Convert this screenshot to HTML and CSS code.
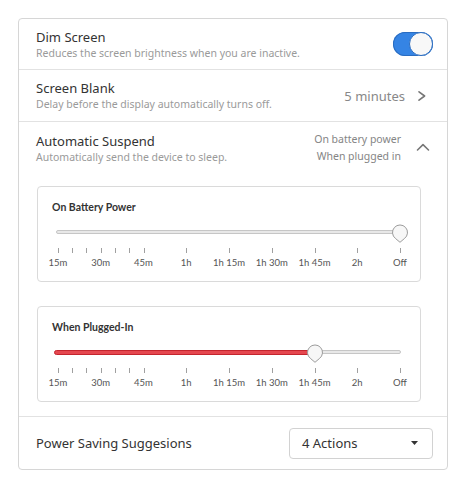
FILE: index.html
```html
<!DOCTYPE html>
<html>
<head>
<meta charset="utf-8">
<link rel="stylesheet" href="styles.css">
</head>
<body>
<div class="page">
  <div class="card">
    <div class="row row-dim">
      <div class="text">
        <div class="title">Dim Screen</div>
        <div class="sub">Reduces the screen brightness when you are inactive.</div>
      </div>
      <div class="toggle"><span class="toggle-knob"></span></div>
    </div>
    <div class="row row-blank">
      <div class="text">
        <div class="title">Screen Blank</div>
        <div class="sub">Delay before the display automatically turns off.</div>
      </div>
      <div class="value">5 minutes</div>
      <svg class="icon" width="16" height="16" viewBox="0 0 16 16"><path d="M5 3.8 L10.6 8 L5 12.2" fill="none" stroke="#777" stroke-width="1.6" stroke-linecap="round" stroke-linejoin="round"/></svg>
    </div>
    <div class="expander">
      <div class="row row-head">
        <div class="text">
          <div class="title">Automatic Suspend</div>
          <div class="sub">Automatically send the device to sleep.</div>
        </div>
        <div class="summary">
          <div>On battery power</div>
          <div>When plugged in</div>
        </div>
        <svg class="icon" width="16" height="16" viewBox="0 0 16 16"><path d="M3.5 10 L9 4.6 L14.5 10" fill="none" stroke="#777" stroke-width="1.6" stroke-linecap="round" stroke-linejoin="round"/></svg>
      </div>
      <div class="panels">
        <div class="panel">
          <div class="panel-title">On Battery Power</div>
          <div class="scale">
            <div class="track-area">
              <div class="track"></div>
              <svg class="knob" style="left:100%" width="17" height="20" viewBox="0 0 17 20"><path d="M8.5 18.3 L3.9 14.4 A7.5 7.5 0 1 1 13.1 14.4 Z" fill="#f7f7f7" stroke="#9b9b9b" stroke-width="1"/></svg>
            </div>
            <div class="ticks">
              <span class="tick" style="left:0%"></span>
              <span class="tick" style="left:4.1667%"></span>
              <span class="tick" style="left:8.3333%"></span>
              <span class="tick" style="left:12.5%"></span>
              <span class="tick" style="left:16.6667%"></span>
              <span class="tick" style="left:20.8333%"></span>
              <span class="tick" style="left:25%"></span>
              <span class="tick" style="left:37.5%"></span>
              <span class="tick" style="left:50%"></span>
              <span class="tick" style="left:62.5%"></span>
              <span class="tick" style="left:75%"></span>
              <span class="tick" style="left:87.5%"></span>
              <span class="tick" style="left:100%"></span>
            </div>
            <div class="labels">
              <span class="label" style="left:0%">15m</span>
              <span class="label" style="left:12.5%">30m</span>
              <span class="label" style="left:25%">45m</span>
              <span class="label" style="left:37.5%">1h</span>
              <span class="label" style="left:50%">1h 15m</span>
              <span class="label" style="left:62.5%">1h 30m</span>
              <span class="label" style="left:75%">1h 45m</span>
              <span class="label" style="left:87.5%">2h</span>
              <span class="label" style="left:100%">Off</span>
            </div>
          </div>
        </div>
        <div class="panel">
          <div class="panel-title">When Plugged-In</div>
          <div class="scale">
            <div class="track-area">
              <div class="track"></div>
              <div class="fill" style="width:75%"></div>
              <svg class="knob" style="left:75%" width="17" height="20" viewBox="0 0 17 20"><path d="M8.5 18.3 L3.9 14.4 A7.5 7.5 0 1 1 13.1 14.4 Z" fill="#f7f7f7" stroke="#9b9b9b" stroke-width="1"/></svg>
            </div>
            <div class="ticks">
              <span class="tick" style="left:0%"></span>
              <span class="tick" style="left:4.1667%"></span>
              <span class="tick" style="left:8.3333%"></span>
              <span class="tick" style="left:12.5%"></span>
              <span class="tick" style="left:16.6667%"></span>
              <span class="tick" style="left:20.8333%"></span>
              <span class="tick" style="left:25%"></span>
              <span class="tick" style="left:37.5%"></span>
              <span class="tick" style="left:50%"></span>
              <span class="tick" style="left:62.5%"></span>
              <span class="tick" style="left:75%"></span>
              <span class="tick" style="left:87.5%"></span>
              <span class="tick" style="left:100%"></span>
            </div>
            <div class="labels">
              <span class="label" style="left:0%">15m</span>
              <span class="label" style="left:12.5%">30m</span>
              <span class="label" style="left:25%">45m</span>
              <span class="label" style="left:37.5%">1h</span>
              <span class="label" style="left:50%">1h 15m</span>
              <span class="label" style="left:62.5%">1h 30m</span>
              <span class="label" style="left:75%">1h 45m</span>
              <span class="label" style="left:87.5%">2h</span>
              <span class="label" style="left:100%">Off</span>
            </div>
          </div>
        </div>
      </div>
    </div>
    <div class="row row-last">
      <div class="text">
        <div class="title">Power Saving Suggesions</div>
      </div>
      <div class="dropdown">
        <span>4 Actions</span>
        <svg width="7" height="4" viewBox="0 0 7 4"><path d="M0 0 H7 L3.5 4 Z" fill="#333"/></svg>
      </div>
    </div>
  </div>
</div>
</body>
</html>
```

FILE: styles.css
```css
html, body {
  margin: 0;
  background: #ffffff;
  font-family: "Noto Sans", "DejaVu Sans", sans-serif;
}

.page {
  padding: 18px 19px 18px 18px;
}

.card {
  width: 430px;
  box-sizing: border-box;
  border: 1px solid #d6d6d6;
  border-radius: 4px;
  background: #fff;
}

.row {
  display: flex;
  align-items: center;
  box-sizing: border-box;
  padding: 0 17px;
  border-bottom: 1px solid #e2e2e2;
}

.row-dim { height: 51px; padding-right: 14px; }
.row-blank { height: 52px; }
.row-head { height: 52px; border-bottom: none; }
.row-last { height: 52px; border-bottom: none; padding-right: 14px; }

.text { flex: 1; min-width: 0; }

.title {
  font-size: 13px;
  line-height: 18px;
  color: #333333;
}

.sub {
  font-size: 10.5px;
  line-height: 15px;
  color: #9a9a9a;
}

.toggle {
  width: 40px;
  height: 24px;
  border-radius: 12px;
  background: #3584e4;
  box-shadow: inset 0 0 0 1px #2a6cc0;
  display: flex;
  justify-content: flex-end;
}

.toggle-knob {
  width: 24px;
  height: 24px;
  box-sizing: border-box;
  border-radius: 50%;
  background: #f8f8f8;
  border: 1px solid #2a6cc0;
}

.value {
  font-size: 13px;
  color: #888888;
  margin-right: 9px;
}

.icon { flex: none; display: block; }

.summary {
  font-size: 10.5px;
  line-height: 17px;
  color: #858585;
  text-align: right;
  margin-right: 13px;
}

.expander {
  border-bottom: 1px solid #e2e2e2;
}

.panels {
  padding: 12px 26px 14px 18px;
}

.panel {
  border: 1px solid #dadada;
  border-radius: 4px;
  padding: 13px 14px 11px 14px;
}

.panel + .panel { margin-top: 24px; }

.panel-title {
  font-family: "Lato", "Noto Sans", sans-serif;
  font-weight: 700;
  font-size: 10.5px;
  line-height: 14px;
  color: #333333;
}

.scale {
  margin: 0 6px;
}

.track-area {
  position: relative;
  height: 34px;
}

.track {
  position: absolute;
  left: -2px;
  right: -1px;
  top: 16px;
  height: 4px;
  box-sizing: border-box;
  border-radius: 2px;
  background: #e8e8e8;
  border: 1px solid #c6c6c6;
}

.fill {
  position: absolute;
  left: -4px;
  top: 15.5px;
  height: 5px;
  box-sizing: border-box;
  border-radius: 3px;
  background: #e5474f;
  border: 1px solid #c4252e;
}

.knob {
  position: absolute;
  top: 9.5px;
  transform: translateX(-50%);
}

.ticks {
  position: relative;
  height: 5px;
}

.tick {
  position: absolute;
  top: 0;
  width: 1px;
  height: 5px;
  background: #a0a0a0;
}

.labels {
  position: relative;
  height: 14px;
  margin-top: 3px;
}

.label {
  position: absolute;
  top: 0;
  transform: translateX(-50%);
  font-family: "Lato", "Noto Sans", sans-serif;
  font-size: 9.5px;
  line-height: 14px;
  color: #555555;
  white-space: nowrap;
}

.dropdown {
  width: 144px;
  height: 31px;
  box-sizing: border-box;
  border: 1px solid #d2d2d2;
  border-radius: 4px;
  display: flex;
  align-items: center;
  justify-content: space-between;
  padding: 0 14px 0 12px;
  font-size: 13px;
  color: #333333;
}
```
